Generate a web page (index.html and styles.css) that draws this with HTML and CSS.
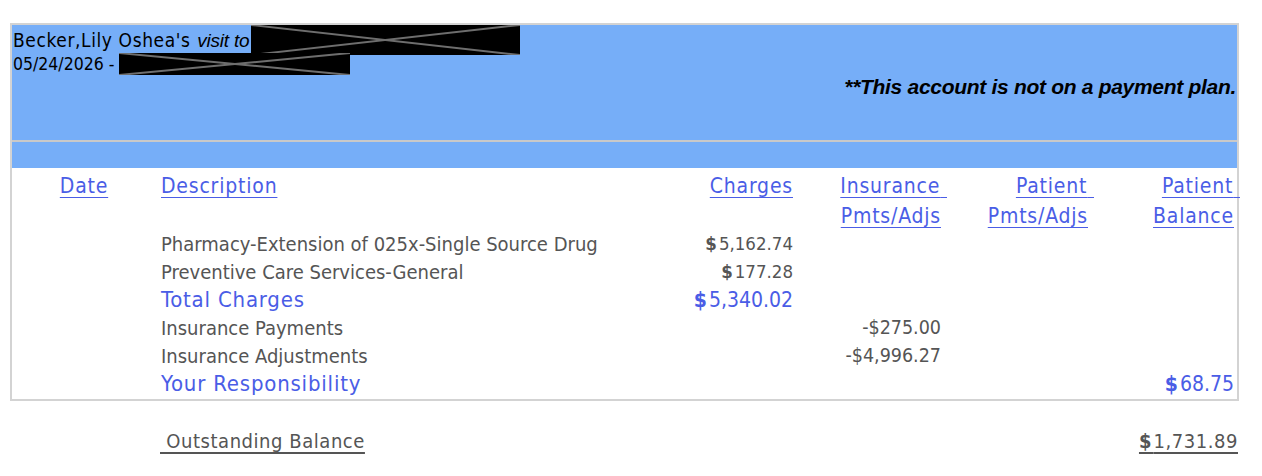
FILE: index.html
```html
<!DOCTYPE html>
<html lang="en">
<head>
    <meta charset="UTF-8">
    <title>Visit Statement</title>
    <link rel="stylesheet" href="styles.css">
</head>
<body>
    <div class="statement">
        <div class="visit-head">
            <div class="who-line">
                <span class="patient-name">Becker,Lily Oshea's</span> <span class="visit-to">visit to</span><span class="redact redact-place"><svg viewBox="0 0 100 100" preserveAspectRatio="none"><line x1="0" y1="0" x2="100" y2="100"/><line x1="0" y1="100" x2="100" y2="0"/></svg></span>
            </div>
            <div class="date-line">
                05/24/2026 - <span class="redact redact-date"><svg viewBox="0 0 100 100" preserveAspectRatio="none"><line x1="0" y1="0" x2="100" y2="100"/><line x1="0" y1="100" x2="100" y2="0"/></svg></span>
            </div>
            <p class="plan-note">**This account is not on a payment plan.</p>
        </div>
        <div class="visit-band"></div>

        <table class="charges">
            <colgroup>
                <col class="col-date">
                <col class="col-desc">
                <col class="col-charges">
                <col class="col-ins">
                <col class="col-pat">
                <col class="col-bal">
            </colgroup>
            <thead>
                <tr>
                    <th class="center"><a href="#">Date</a></th>
                    <th class="left"><a href="#">Description</a></th>
                    <th><a href="#">Charges</a></th>
                    <th><a href="#">Insurance<span class="trail">&nbsp;</span></a><br><a href="#">Pmts/Adjs</a></th>
                    <th><a href="#">Patient<span class="trail">&nbsp;</span></a><br><a href="#">Pmts/Adjs</a></th>
                    <th class="last"><a href="#">Patient<span class="trail">&nbsp;</span></a><br><a href="#">Balance</a></th>
                </tr>
            </thead>
            <tbody>
                <tr>
                    <td></td>
                    <td class="left">Pharmacy-Extension of 025x-Single Source Drug</td>
                    <td class="amt"><span class="dollar">$</span>5,162.74</td>
                    <td></td><td></td><td></td>
                </tr>
                <tr>
                    <td></td>
                    <td class="left">Preventive Care Services-General</td>
                    <td class="amt"><span class="dollar">$</span>177.28</td>
                    <td></td><td></td><td></td>
                </tr>
                <tr class="total">
                    <td></td>
                    <td class="left">Total Charges</td>
                    <td class="amt"><span class="dollar">$</span>5,340.02</td>
                    <td></td><td></td><td></td>
                </tr>
                <tr>
                    <td></td>
                    <td class="left">Insurance Payments</td>
                    <td></td>
                    <td class="plain">-$275.00</td>
                    <td></td><td></td>
                </tr>
                <tr>
                    <td></td>
                    <td class="left">Insurance Adjustments</td>
                    <td></td>
                    <td class="plain">-$4,996.27</td>
                    <td></td><td></td>
                </tr>
                <tr class="total">
                    <td></td>
                    <td class="left">Your Responsibility</td>
                    <td></td><td></td><td></td>
                    <td class="amt last"><span class="dollar">$</span>68.75</td>
                </tr>
            </tbody>
        </table>
    </div>

    <div class="outstanding">
        <span class="outstanding-label">&nbsp;Outstanding Balance</span>
        <span class="outstanding-amount"><span class="dollar">$</span>1,731.89</span>
    </div>
</body>
</html>
```

FILE: styles.css
```css
body {
    margin: 0;
    background-color: #fff;
    font-family: "DejaVu Sans Condensed", "Liberation Sans Narrow", "Liberation Sans", sans-serif;
    color: #555;
}

.statement {
    margin: 23px 23px 0 10px;
    border: 2px solid #d3d3d3;
}

.visit-head {
    display: flex;
    flex-direction: column;
    height: 115px;
    padding-left: 1px;
    padding-right: 1px;
    background-color: #76aef8;
    border-bottom: 2px solid #c9c9c9;
    color: #000;
}

.who-line {
    height: 30px;
    line-height: 30px;
    white-space: nowrap;
}

.patient-name {
    font-size: 19px;
    letter-spacing: 0.6px;
}

.visit-to {
    margin-left: 2px;
    margin-right: 2px;
    font-family: "Liberation Sans", sans-serif;
    font-style: italic;
    font-size: 19px;
    letter-spacing: -0.2px;
}

.date-line {
    height: 22px;
    margin-top: -2px;
    line-height: 22px;
    font-size: 17.5px;
    white-space: nowrap;
}

.redact {
    display: inline-block;
    vertical-align: top;
    background-color: #000;
}

.redact svg {
    display: block;
    width: 100%;
    height: 100%;
}

.redact line {
    stroke: #6e6e6e;
    stroke-width: 2;
    vector-effect: non-scaling-stroke;
}

.redact-place {
    width: 269px;
    height: 30px;
}

.redact-date {
    width: 231px;
    height: 22px;
}

.plan-note {
    align-self: flex-end;
    margin: 0;
    line-height: 24px;
    font-family: "Liberation Sans", sans-serif;
    font-size: 21px;
    font-weight: bold;
    font-style: italic;
    letter-spacing: -0.3px;
}

.visit-band {
    height: 26px;
    background-color: #76aef8;
}

.charges {
    width: 100%;
    border-collapse: collapse;
    table-layout: fixed;
    font-size: 20px;
}

.col-date { width: 144px; }
.col-desc { width: 484px; }
.col-charges { width: 158px; }
.col-ins { width: 148px; }
.col-pat { width: 147px; }
.col-bal { width: 144px; }

.charges th {
    padding: 3px 5px 0 0;
    vertical-align: top;
    text-align: right;
    font-size: 21px;
    font-weight: normal;
    line-height: 30px;
    letter-spacing: 0.8px;
}

.charges th a {
    color: #4a5de6;
    text-decoration: underline;
    text-underline-offset: 4px;
    text-decoration-thickness: 1px;
}

.charges .trail {
    margin-right: -6px;
}

.charges th.center {
    text-align: center;
    padding-right: 0;
}

.charges .left {
    text-align: left;
    padding-left: 5px;
}

.charges .last {
    padding-right: 3px;
}

.charges td {
    height: 26px;
    padding: 0 5px 2px 0;
    text-align: right;
    line-height: 26px;
    white-space: nowrap;
}

.charges .total td {
    color: #4a5de6;
    font-size: 22px;
    letter-spacing: 0.8px;
}

.charges td.amt {
    font-size: 18.5px;
    letter-spacing: 0;
}

.charges .total td.amt {
    font-size: 21px;
    letter-spacing: 0;
}

.charges td.plain {
    font-size: 19.5px;
    letter-spacing: 0;
}

.dollar {
    font-weight: bold;
    letter-spacing: 2px;
}

.outstanding {
    display: flex;
    justify-content: space-between;
    margin: 26px 24px 0 160px;
    font-size: 20px;
    letter-spacing: 0.55px;
    line-height: 28px;
}

.outstanding-label,
.outstanding-amount {
    text-decoration: underline;
    text-underline-offset: 4px;
}
```
